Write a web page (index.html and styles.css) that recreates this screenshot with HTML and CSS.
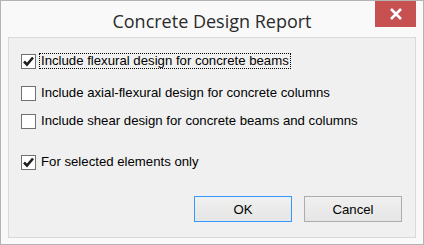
FILE: index.html
```html
<!DOCTYPE html>
<html>
<head>
<meta charset="utf-8">
<link rel="stylesheet" href="styles.css">
</head>
<body>
<div class="window">
  <div class="titlebar">
    <div></div>
    <div class="title">Concrete Design Report</div>
    <div class="controls">
      <div class="close"><svg width="14" height="12" viewBox="0 0 14 12"><path d="M2 1 L12 11 M12 1 L2 11" stroke="#fff" stroke-width="2.6" stroke-linecap="butt"/></svg></div>
    </div>
  </div>
  <div class="client">
    <div class="row r1">
      <span class="box checked"><svg width="13" height="13" viewBox="0 0 13 13"><path d="M2 6.5 L5 9.5 L11 2.5" fill="none" stroke="#1e1e1e" stroke-width="2.6"/></svg></span>
      <span class="label focus">Include flexural design for concrete beams</span>
    </div>
    <div class="row r2">
      <span class="box"></span>
      <span class="label">Include axial-flexural design for concrete columns</span>
    </div>
    <div class="row r3">
      <span class="box"></span>
      <span class="label">Include shear design for concrete beams and columns</span>
    </div>
    <div class="row r4">
      <span class="box checked"><svg width="13" height="13" viewBox="0 0 13 13"><path d="M2 6.5 L5 9.5 L11 2.5" fill="none" stroke="#1e1e1e" stroke-width="2.6"/></svg></span>
      <span class="label">For selected elements only</span>
    </div>
    <div class="buttons">
      <button class="btn default">OK</button>
      <button class="btn">Cancel</button>
    </div>
  </div>
</div>
</body>
</html>
```
FILE: styles.css
```css
* { box-sizing: border-box; }
html, body { margin: 0; padding: 0; }
body { width: 424px; height: 245px; overflow: hidden; background: #f9f9f9; }
.window {
  width: 424px; height: 245px;
  border: 1px solid #b4b4b4;
  background: #f9f9f9;
  display: flex; flex-direction: column;
}
.titlebar {
  height: 36px;
  display: grid;
  grid-template-columns: 1fr auto 1fr;
  align-items: start;
}
.title {
  font-family: "Open Sans", "Noto Sans", sans-serif;
  font-size: 18px;
  line-height: 24px;
  color: #2b2b2b;
  padding-top: 8px;
  white-space: nowrap;
}
.controls { display: flex; justify-content: flex-end; padding-right: 7px; }
.close {
  width: 41px; height: 26px;
  background: #c75050;
  display: flex; align-items: center; justify-content: center;
}
.client {
  flex: 1;
  margin: 0 7px 6px 7px;
  border: 1px solid #d9d9d9;
  background: #f0f0f0;
  display: flex; flex-direction: column;
  padding: 15px 12px 15px 12px;
  font-family: "Liberation Sans", Arial, sans-serif;
  font-size: 13.2px;
  color: #000;
}
.row { display: flex; align-items: center; height: 16px; }
.r2 { margin-top: 16px; }
.r3 { margin-top: 12px; }
.r4 { margin-top: 25px; }
.box {
  width: 15px; height: 15px;
  border: 1px solid #707070;
  background: #fff;
  display: flex; align-items: center; justify-content: center;
  flex: none;
}
.label { margin-left: 3px; padding: 0 1px; border: 1px dotted transparent; line-height: 14px; white-space: nowrap; }
.label.focus { border-color: #000; }
.buttons {
  margin-top: auto;
  display: flex; justify-content: flex-end; gap: 12px;
  padding-right: 1px;
}
.btn {
  width: 98px; height: 26px;
  border: 1px solid #adadad;
  background: linear-gradient(#f0f0f0, #e5e5e5);
  font-family: "Liberation Sans", Arial, sans-serif;
  font-size: 13.2px; color: #000;
  padding: 0; margin: 0;
}
.btn.default { border-color: #3399ff; }
```
